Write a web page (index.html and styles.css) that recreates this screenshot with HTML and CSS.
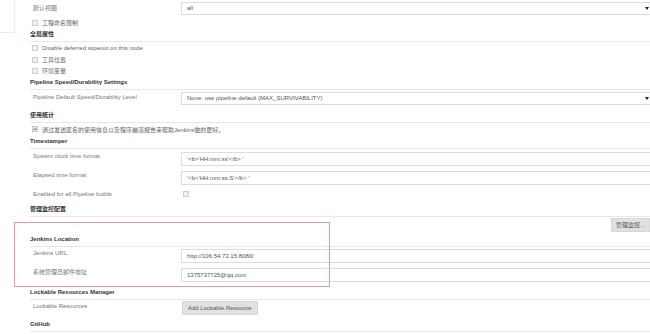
FILE: index.html
```html
<!DOCTYPE html>
<html lang="zh-CN">

<head>
    <meta charset="utf-8">
    <meta name="viewport" content="width=device-width, initial-scale=1.0">
    <title>配置系统 [Jenkins]</title>
    <link rel="stylesheet" href="styles.css">
</head>

<body>
    <div class="page">
        <div class="side">
            <div class="side-box"></div>
        </div>

        <div class="main">
            <div class="row row-top">
                <div class="label">默认视图</div>
                <div class="field">
                    <div class="select">all<span class="caret"></span></div>
                </div>
            </div>
            <div class="check-row h11"><span class="box"></span>工程命名限制</div>

            <div class="section">全局属性</div>
            <div class="check-row h12"><span class="box"></span>Disable deferred wipeout on this node</div>
            <div class="check-row h11"><span class="box"></span>工具位置</div>
            <div class="check-row h11"><span class="box"></span>环境变量</div>

            <div class="section">Pipeline Speed/Durability Settings</div>
            <div class="row row-pipeline">
                <div class="label">Pipeline Default Speed/Durability Level</div>
                <div class="field">
                    <div class="select">None: use pipeline default (MAX_SURVIVABILITY)<span class="caret"></span></div>
                </div>
            </div>

            <div class="section">使用统计</div>
            <div class="check-row h12">
                <span class="box checked">
                    <svg viewBox="0 0 6 6" width="6" height="6"><path d="M1.2 3.1 L2.5 4.4 L4.9 1.4" fill="none" stroke="#333" stroke-width="1.1"/></svg>
                </span>通过发送匿名的使用信息以及程序崩溃报告来帮助Jenkins做的更好。
            </div>

            <div class="section">Timestamper</div>
            <div class="row row-clock">
                <div class="label">System clock time format</div>
                <div class="field">
                    <div class="input">'&lt;b&gt;'HH:mm:ss'&lt;/b&gt; '</div>
                </div>
            </div>
            <div class="row row-elapsed">
                <div class="label">Elapsed time format</div>
                <div class="field">
                    <div class="input">'&lt;b&gt;'HH:mm:ss.S'&lt;/b&gt; '</div>
                </div>
            </div>
            <div class="row row-enabled">
                <div class="label">Enabled for all Pipeline builds</div>
                <div class="field"><span class="box"></span></div>
            </div>

            <div class="section">管理监控配置</div>
            <div class="button-row">
                <button class="btn">管理监控...</button>
            </div>

            <div class="section">Jenkins Location</div>
            <div class="row row-url">
                <div class="label">Jenkins URL</div>
                <div class="field">
                    <div class="input">http://106.54.73.15:8080/</div>
                </div>
            </div>
            <div class="row row-email">
                <div class="label">系统管理员邮件地址</div>
                <div class="field">
                    <div class="input">1375737725@qq.com</div>
                </div>
            </div>

            <div class="section">Lockable Resources Manager</div>
            <div class="row row-lock">
                <div class="label">Lockable Resources</div>
                <div class="field">
                    <button class="btn btn-add">Add Lockable Resource</button>
                </div>
            </div>

            <div class="section">GitHub</div>
        </div>
    </div>

    <!-- highlight drawn over the Jenkins Location block -->
    <div class="mark"></div>
</body>

</html>
```

FILE: styles.css
```css
body {
    margin: 0;
    padding: 0;
    overflow: hidden;
    background: #fff;
    font-family: "Liberation Sans", Arial, "Noto Sans CJK SC", sans-serif;
    font-size: 6px;
    color: #666;
}

.page {
    display: flex;
    width: 670px;
}

.side {
    flex: 0 0 15px;
}

.side-box {
    height: 33px;
    border-right: 1px solid #ececec;
    border-bottom: 1px solid #ececec;
    box-sizing: border-box;
}

.main {
    flex: 0 0 625px;
    margin-left: 15px;
    display: flex;
    flex-direction: column;
}

.section {
    line-height: 12px;
    padding-bottom: 1px;
    border-bottom: 1px solid #e8e8e8;
    font-weight: bold;
    color: #333;
}

.row {
    display: grid;
    grid-template-columns: 151px 1fr;
    box-sizing: border-box;
}

.label {
    padding-left: 3px;
    line-height: 12px;
    color: #777;
}

.row-top { height: 17px; }
.row-top .label,
.row-top .field { padding-top: 2px; }

.row-pipeline { height: 19px; }
.row-pipeline .label { padding-top: 1px; }
.row-pipeline .field { padding-top: 2px; }

.row-clock { height: 19px; }
.row-clock .label { padding-top: 1px; }
.row-clock .field { padding-top: 3px; }

.row-elapsed { height: 19px; }
.row-elapsed .label { padding-top: 1px; }
.row-elapsed .field { padding-top: 3px; }

.row-enabled { height: 16px; }
.row-enabled .label { padding-top: 1px; }
.row-enabled .field { padding-top: 4px; padding-left: 2px; }

.row-url { height: 19px; }
.row-url .field { padding-top: 2px; }

.row-email { height: 20px; }
.row-email .field { padding-top: 2px; }

.row-lock { height: 18px; }
.row-lock .field { padding-top: 1px; }

.select,
.input {
    position: relative;
    box-sizing: border-box;
    height: 14px;
    line-height: 12px;
    padding-left: 5px;
    border: 1px solid #dcdcdc;
    color: #555;
    background: #fff;
    white-space: nowrap;
}

.select {
    height: 13px;
    line-height: 11px;
}

.caret {
    position: absolute;
    right: 5px;
    top: 4px;
    width: 0;
    height: 0;
    border-left: 2px solid transparent;
    border-right: 2px solid transparent;
    border-top: 3px solid #222;
}

.check-row {
    display: flex;
    align-items: center;
    padding-left: 2px;
    color: #666;
    white-space: nowrap;
}

.h11 { height: 11px; }
.h12 { height: 12px; }

.box {
    display: inline-flex;
    align-items: center;
    justify-content: center;
    width: 6px;
    height: 6px;
    box-sizing: border-box;
    border: 1px solid #cfcfcf;
    background: #efefef;
    margin-right: 4px;
}

.box.checked {
    border-color: #c8c8c8;
    background: #e6e6e6;
}

.button-row {
    height: 16px;
    display: flex;
    justify-content: flex-end;
    align-items: flex-start;
    padding-right: 5px;
}

.btn {
    height: 14px;
    margin: 1px 0 0 0;
    padding: 0 4px;
    border: 1px solid #d6d6d6;
    background: #e1e1e1;
    color: #555;
    font-family: inherit;
    font-size: 6px;
    line-height: 12px;
}

.btn-add {
    margin-top: 0;
    padding: 0 5px;
    margin-left: 1px;
}

.mark {
    position: absolute;
    left: 14px;
    top: 222px;
    width: 316px;
    height: 65px;
    box-sizing: border-box;
    border: 1px solid #e89a9a;
    pointer-events: none;
}
```
